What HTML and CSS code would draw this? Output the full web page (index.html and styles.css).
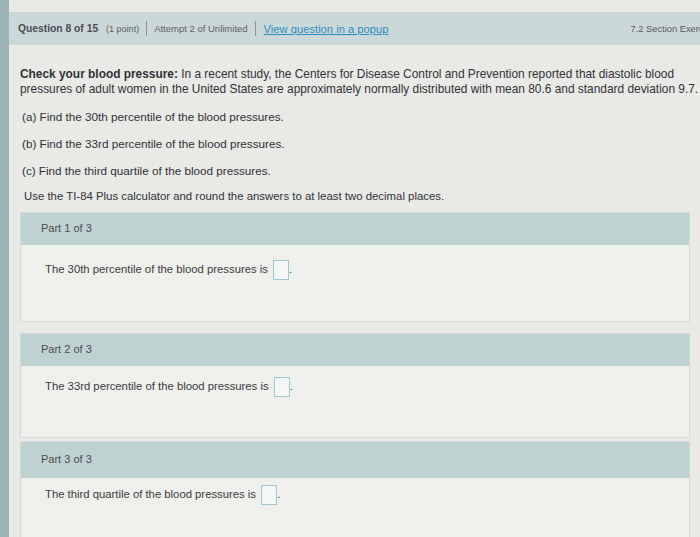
FILE: index.html
```html
<!DOCTYPE html>
<html lang="en">

<head>
    <meta charset="UTF-8">
    <meta name="viewport" content="width=device-width, initial-scale=1.0">
    <title>Question 8 of 15</title>
    <link rel="stylesheet" href="styles.css">
</head>

<body>
    <div class="screen">
        <div class="rail"></div>
        <div class="page">
            <div class="topbar">
                <span class="q-num">Question 8 of 15</span>
                <span class="q-points">(1 point)</span>
                <span class="sep"></span>
                <span class="q-attempt">Attempt 2 of Unlimited</span>
                <span class="sep"></span>
                <a class="q-popup" href="#">View question in a popup</a>
                <span class="q-section">7.2 Section Exercises</span>
            </div>

            <div class="question">
                <p class="intro"><b>Check your blood pressure:</b> In a recent study, the Centers for Disease Control and Prevention reported that diastolic blood pressures of adult women in the United States are approximately normally distributed with mean 80.6 and standard deviation 9.7.</p>
                <p class="item">(a) Find the 30th percentile of the blood pressures.</p>
                <p class="item">(b) Find the 33rd percentile of the blood pressures.</p>
                <p class="item">(c) Find the third quartile of the blood pressures.</p>
                <p class="item note">Use the TI-84 Plus calculator and round the answers to at least two decimal places.</p>
            </div>

            <div class="part">
                <div class="part-head">Part 1 of 3</div>
                <div class="part-body">
                    The 30th percentile of the blood pressures is <span class="answer"></span>.
                </div>
            </div>

            <div class="part part-mid">
                <div class="part-head">Part 2 of 3</div>
                <div class="part-body">
                    The 33rd percentile of the blood pressures is <span class="answer"></span>.
                </div>
            </div>

            <div class="part part-last">
                <div class="part-head">Part 3 of 3</div>
                <div class="part-body">
                    The third quartile of the blood pressures is <span class="answer"></span>.
                </div>
            </div>
        </div>
    </div>
</body>

</html>
```

FILE: styles.css
```css
body {
    margin: 0;
    background-color: #e9e9e6;
    font-family: 'Liberation Sans', Arial, sans-serif;
    color: #3a3d40;
    overflow: hidden;
}

.screen {
    display: flex;
    min-height: 537px;
}

.rail {
    width: 9px;
    flex-shrink: 0;
    background-color: #9fb4b6;
}

.page {
    flex: 1;
    padding-top: 12px;
    min-width: 0;
}

/* question header strip */
.topbar {
    height: 33px;
    display: flex;
    align-items: center;
    padding-left: 9px;
    background-color: #cbd8d9;
    white-space: nowrap;
    overflow: hidden;
}

.q-num {
    font-weight: bold;
    font-size: 10.3px;
    color: #4a4d50;
}

.q-points {
    font-size: 9px;
    margin-left: 8px;
    color: #5c6064;
}

.sep {
    width: 1px;
    height: 15px;
    background-color: #8e9699;
    margin: 0 7px;
}

.q-attempt {
    font-size: 9.5px;
    color: #5c6064;
}

.q-popup {
    font-size: 11.2px;
    color: #2b8cc0;
    margin-left: 1px;
}

.q-section {
    margin-left: auto;
    margin-right: -20px;
    font-size: 9.3px;
    color: #55595d;
}

/* problem statement */
.question {
    padding: 22px 0 0 11px;
    font-size: 11.7px;
    color: #303337;
}

.question p {
    margin: 0;
}

.intro {
    width: 682px;
    font-size: 11.9px;
    line-height: 15px;
}

.item {
    margin-top: 12px !important;
    padding-left: 2px;
    line-height: 15px;
}

.note {
    margin-top: 11px !important;
    padding-left: 4px;
    font-size: 11.4px;
}

/* answer parts */
.part {
    margin: 8px 10px 0 11px;
    border: 1px solid #d3d8d8;
    background-color: #efefec;
}

.part + .part {
    margin-top: 11px;
}

.part-head {
    height: 32px;
    line-height: 30px;
    padding-left: 20px;
    font-size: 11px;
    color: #4a4d50;
    background-color: #bfd2d2;
}

.part-body {
    height: 76px;
    box-sizing: border-box;
    padding: 15px 0 0 24px;
    font-size: 11.3px;
    color: #3a3d40;
}

.part-mid .part-body {
    height: 71px;
    padding-top: 11px;
}

.part-last {
    margin-top: 3px !important;
}

.part-last .part-head {
    height: 36px;
    line-height: 34px;
}

.part-last .part-body {
    padding-top: 7px;
}

.answer {
    display: inline-block;
    width: 14px;
    height: 18px;
    vertical-align: middle;
    margin-left: 2px;
    border: 1px solid #9fc7cf;
    background-color: #f5f7f7;
}
```
